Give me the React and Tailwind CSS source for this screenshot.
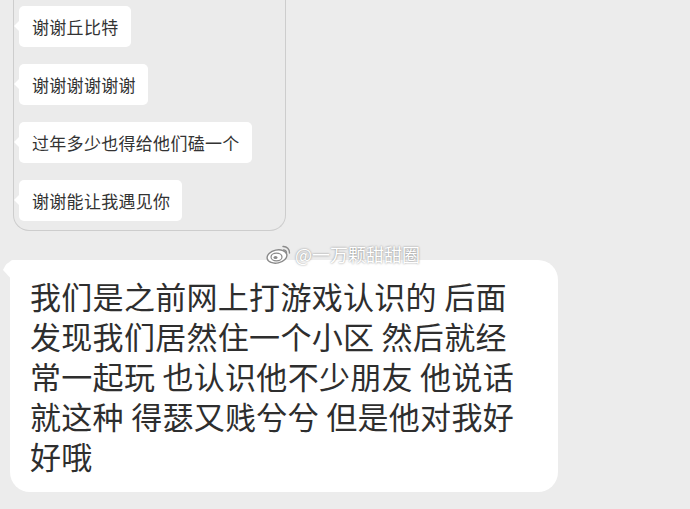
import React from 'react';

const cjk = { fontFamily: '"Noto Sans CJK SC", "Noto Sans", sans-serif' };

const smallMessages = ['谢谢丘比特', '谢谢谢谢谢谢', '过年多少也得给他们磕一个', '谢谢能让我遇见你'];

const bigLines = [
    '我们是之前网上打游戏认识的 后面',
    '发现我们居然住一个小区 然后就经',
    '常一起玩 也认识他不少朋友 他说话',
    '就这种 得瑟又贱兮兮 但是他对我好',
    '好哦',
];

const SmallBubble = ({ text }) => (
    <div className="relative self-start">
        <div className="absolute left-[-5px] top-[15px] w-0 h-0 border-y-[5px] border-y-transparent border-r-[5px] border-r-white" />
        <div className="h-[41px] flex items-center pl-[13px] pr-[12px] bg-white rounded-[5px] text-[17px] tracking-[0.3px] text-[#333] leading-none">
            {text}
        </div>
    </div>
);

const WeiboLogo = () => (
    <svg width="26" height="21" viewBox="0 0 26 21" fill="none">
        <ellipse cx="11" cy="13.5" rx="10" ry="6.5" fill="#fff" stroke="#8a8a8a" strokeWidth="1.4" transform="rotate(-12 11 13.5)" />
        <ellipse cx="10.5" cy="14" rx="5.5" ry="3.8" fill="#fff" stroke="#8a8a8a" strokeWidth="1.2" />
        <ellipse cx="9.5" cy="14.5" rx="2" ry="1.5" fill="#8a8a8a" />
        <path d="M17 3.5 A6 6 0 0 1 23.5 10" stroke="#8a8a8a" strokeWidth="1.4" strokeLinecap="round" />
        <path d="M17.5 6.8 A3 3 0 0 1 20.5 10" stroke="#8a8a8a" strokeWidth="1.3" strokeLinecap="round" />
    </svg>
);

export default function App() {
    return (
        <div className="relative w-[690px] h-[509px] overflow-hidden bg-[#ececec]" style={cjk}>
            <div className="ml-[13px] w-[273px] h-[231px] border border-t-0 border-[#cdcdcd] rounded-b-[16px] bg-[#ebebeb] pt-[6px] pl-[5px] flex flex-col gap-[17px]">
                {smallMessages.map((m) => (
                    <SmallBubble key={m} text={m} />
                ))}
            </div>

            <div className="relative mt-[29px] ml-[10px] w-[548px] h-[232px] bg-white rounded-[20px] rounded-tl-[3px] pt-[16px] pl-[20px]">
                <svg className="absolute left-[-8px] top-0" width="12" height="22" viewBox="0 0 12 22">
                    <path d="M12 0 Q4 2 1 10 L12 22 Z" fill="#fff" />
                </svg>
                {bigLines.map((line) => (
                    <div key={line} className="h-[40px] text-[31px] leading-[40px] tracking-[0.3px] text-[#2e2e2e] whitespace-pre">
                        {line}
                    </div>
                ))}
            </div>

            <div className="absolute left-[266px] top-[243px] flex items-center gap-[3px]">
                <WeiboLogo />
                <span className="text-[18px] leading-none text-white [text-shadow:0_0_2px_rgba(0,0,0,0.5)]">
                    @一万颗甜甜圈
                </span>
            </div>
        </div>
    );
}
